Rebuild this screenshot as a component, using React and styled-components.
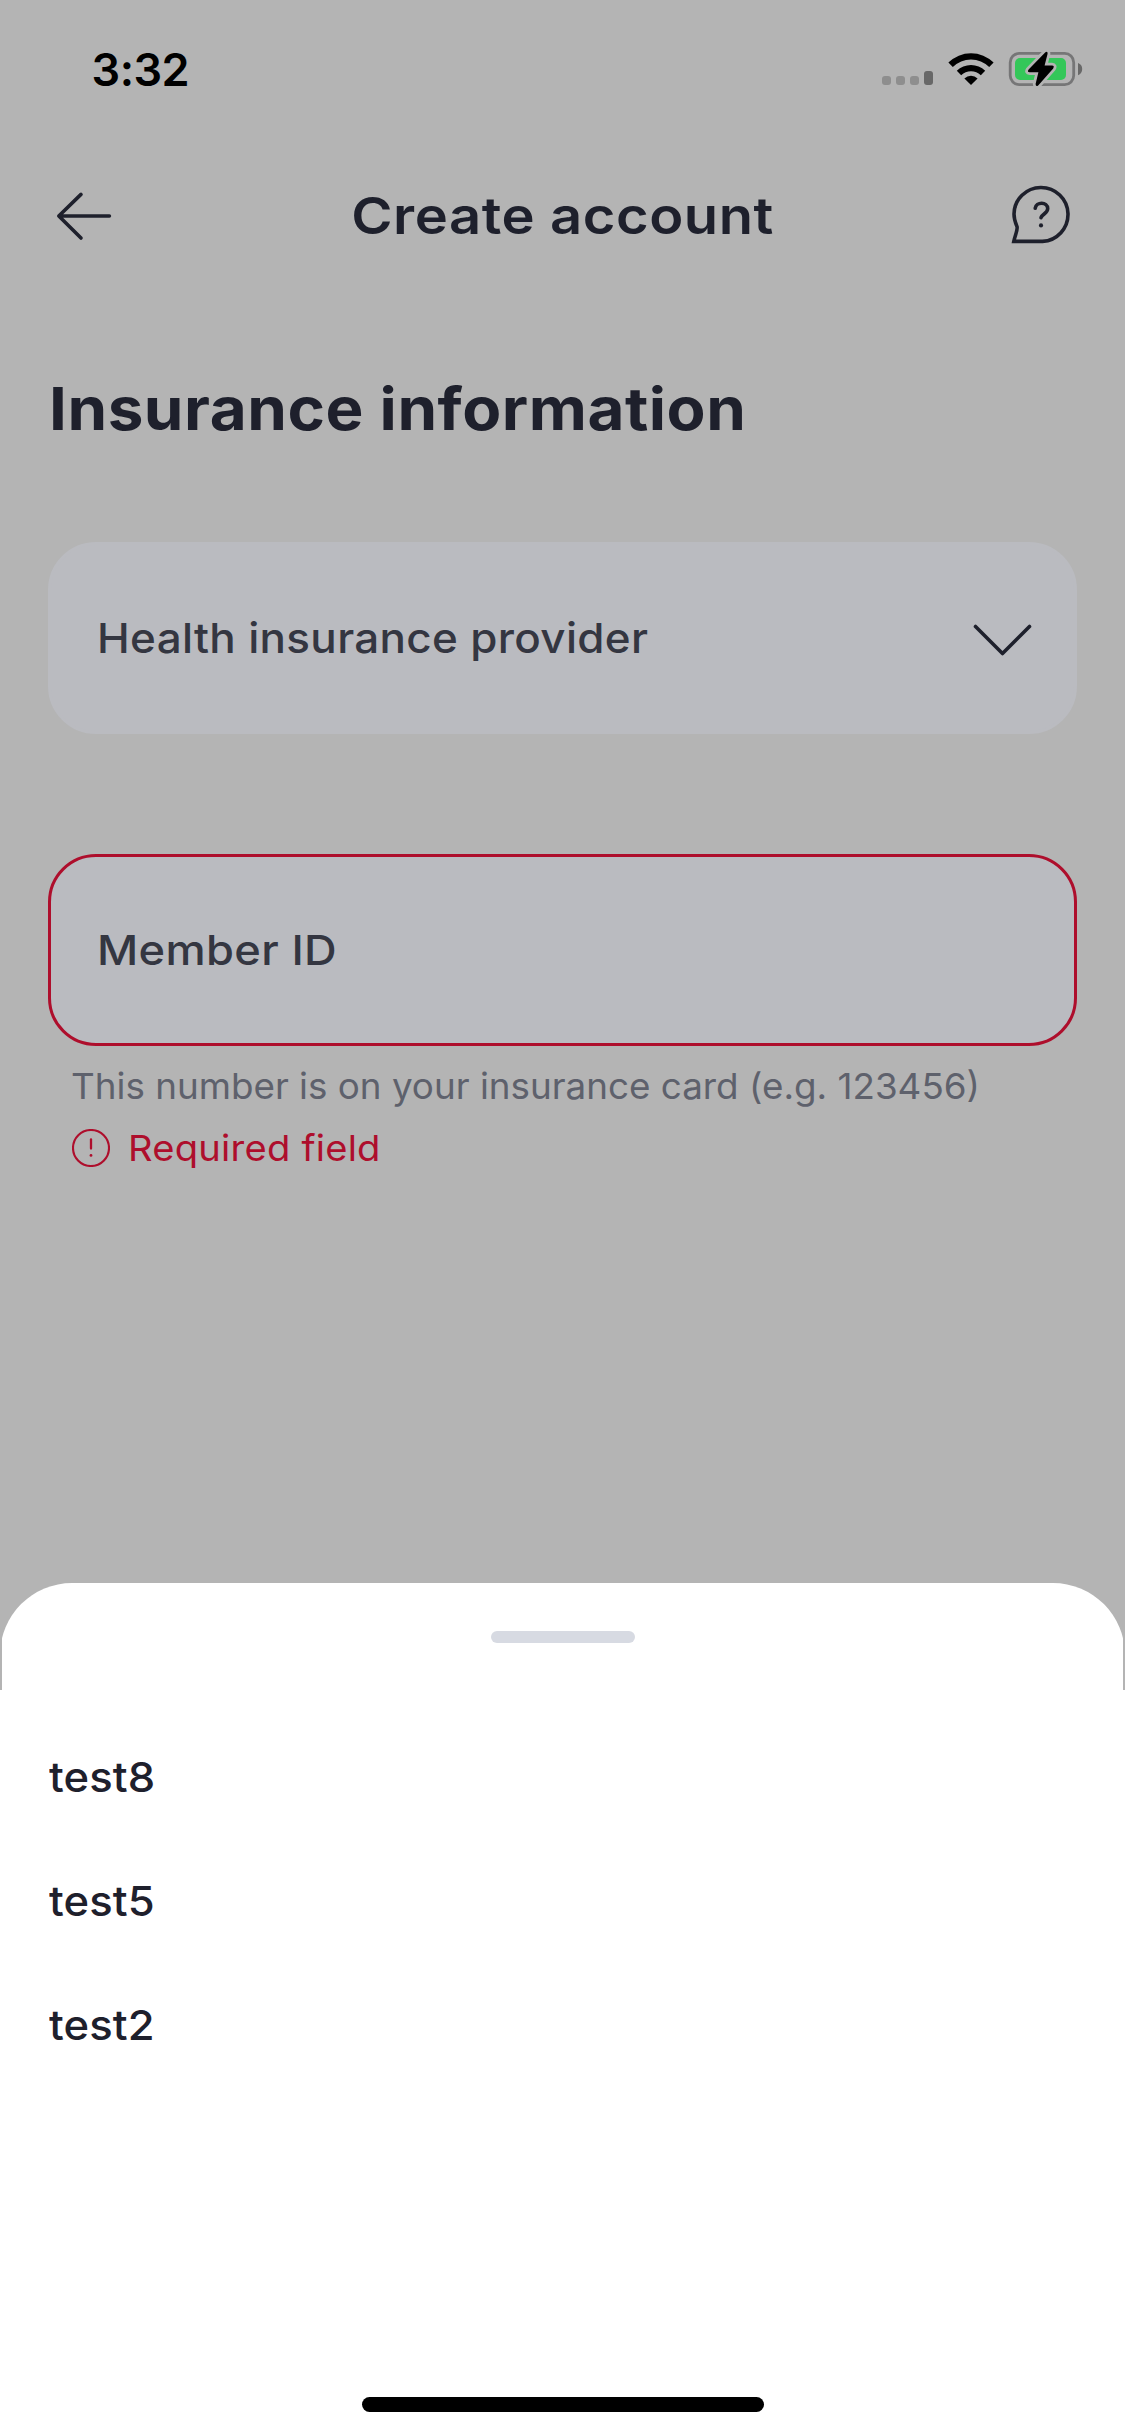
import React from "react";
import styled, { createGlobalStyle, css } from "styled-components";

const ink = "#1e202c";
const danger = "#ae0e2c";

const GlobalStyle = createGlobalStyle`
  *, *::before, *::after { box-sizing: border-box; }
  body {
    margin: 0;
    background: #b4b4b4;
    font-family: Inter, "Open Sans", sans-serif;
    color: ${ink};
  }
`;

const wide = (scale, origin = "left") => css`
  transform: scaleX(${scale});
  transform-origin: ${origin} center;
`;

const Screen = styled.div`
  display: flex;
  flex-direction: column;
  width: 1125px;
  height: 2436px;
  overflow: hidden;
  background: #b4b4b4;
`;

const StatusBar = styled.div`
  display: flex;
  align-items: center;
  justify-content: space-between;
  height: 138px;
  padding: 2px 40px 0 91.5px;
`;

const Time = styled.span`
  color: #000;
  font-size: 45px;
  font-weight: 600;
  letter-spacing: -0.5px;
  line-height: 60px;
`;

const StatusIcons = styled.svg`
  display: block;
  width: 205px;
  height: 40px;
`;

const Header = styled.header`
  display: grid;
  grid-template-columns: 60px 1fr 64px;
  align-items: center;
  height: 156px;
  padding: 0 52px 0 54px;
`;

const HeaderIcon = styled.svg`
  display: block;
  width: ${(p) => p.$size}px;
  height: ${(p) => p.$size}px;
  fill: none;
  stroke: ${ink};
  stroke-width: 3.6;
  stroke-linecap: round;
  stroke-linejoin: round;
`;

const Title = styled.h1`
  margin: 0;
  padding-left: 2px;
  font-size: 51px;
  font-weight: 600;
  letter-spacing: 0.5px;
  line-height: 64px;
  text-align: center;
  white-space: nowrap;
  ${wide(1.1, "center")}
`;

const Form = styled.main`
  display: flex;
  flex-direction: column;
  height: 1289px;
  padding: 76px 48px 0;
`;

const Heading = styled.h2`
  margin: 0 0 94px 1px;
  font-size: 59px;
  font-weight: 700;
  letter-spacing: 0.5px;
  line-height: 78px;
  white-space: nowrap;
  ${wide(1.08)}
`;

const Field = styled.div`
  display: flex;
  flex: none;
  align-items: center;
  justify-content: space-between;
  height: 192px;
  padding: 0 42px 0 46px;
  border: 3px solid ${(p) => (p.$invalid ? danger : "#babbc0")};
  border-radius: 48px;
  background: #babbc0;

  & + & { margin-top: 120px; }
`;

const Label = styled.span`
  color: #343641;
  font-size: 41.5px;
  font-weight: 500;
  letter-spacing: 0.3px;
  line-height: 60px;
  ${(p) => wide(p.$scale)}
`;

const Chevron = styled.svg`
  display: block;
  width: 60px;
  height: 34px;
  margin-top: 4px;
`;

const Hint = styled.p`
  margin: 9px 0 0 23px;
  color: #5e616c;
  font-size: 36px;
  font-weight: 400;
  line-height: 62px;
  white-space: nowrap;
  ${wide(1.022)}
`;

const ErrorRow = styled.div`
  display: flex;
  align-items: center;
  height: 62px;
  margin-left: 24px;
  gap: 18px;
  color: ${danger};
`;

const ErrorIcon = styled.svg`
  display: block;
  width: 38px;
  height: 38px;
`;

const ErrorText = styled.span`
  font-size: 36px;
  letter-spacing: 0.2px;
  line-height: 62px;
  ${wide(1.06)}
`;

const Sheet = styled.section`
  display: flex;
  flex: 1;
  flex-direction: column;
`;

const SheetClip = styled.div`
  height: 107px;
  margin: 0 2px;
  overflow: hidden;
`;

const SheetTop = styled.div`
  display: flex;
  justify-content: center;
  height: 107px;
  margin: 0 -2px;
  padding-top: 48px;
  border-radius: 72px 72px 0 0;
  background: #fff;
`;

const Grabber = styled.div`
  width: 144px;
  height: 12px;
  border-radius: 6px;
  background: #d7dae2;
`;

const SheetBody = styled.div`
  display: flex;
  flex: 1;
  flex-direction: column;
  align-items: center;
  justify-content: space-between;
  padding: 25px 0 24px;
  background: #fff;
`;

const Options = styled.ul`
  align-self: stretch;
  margin: 0;
  padding: 0 49px;
  list-style: none;
`;

const Option = styled.li`
  height: 124px;
  font-size: 41.5px;
  font-weight: 500;
  letter-spacing: 0.1px;
  line-height: 124px;
  ${wide(1.05)}
`;

const HomeIndicator = styled.div`
  width: 402px;
  height: 15px;
  border-radius: 7.5px;
  background: #000;
`;

const bolt =
  "M165.4 2.2 L148.6 19.6 Q146.8 22.2 149.6 22.2 L158.4 22.2 L155.6 34 Q155.8 37.4 158.4 35.2 L173.2 18.4 Q174.8 15.7 172 15.6 L164.6 15.4 L167.6 3.8 Q167.8 0.6 165.4 2.2 Z";

function DeviceStatus() {
  return (
    <StatusIcons viewBox="0 0 205 40">
      <g fill="#8e8e8e">
        <rect x="2" y="26" width="9" height="9" rx="3" />
        <rect x="16" y="26" width="9" height="9" rx="3" />
        <rect x="30" y="26" width="9" height="9" rx="3" />
      </g>
      <rect x="44" y="21" width="9" height="14" rx="3" fill="#686868" />
      <path d="M68.4 12.6 A32 32 0 0 1 113.6 12.6 L109.2 17 A25.8 25.8 0 0 0 72.8 17 Z" fill="#000" />
      <path d="M76.8 20.8 A20.3 20.3 0 0 1 105.2 20.8 L100.8 25.2 A14 14 0 0 0 81.2 25.2 Z" fill="#000" />
      <path d="M84.4 28.4 A9.4 9.4 0 0 1 97.6 28.4 L91 35 Z" fill="#000" />
      <rect x="130.2" y="3.4" width="63.5" height="31.2" rx="9" fill="none" stroke="#767677" strokeWidth="2.8" />
      <rect x="135" y="8" width="51" height="22" rx="5" fill="#34c759" />
      <path d="M198 13 Q202.2 14.6 202.2 19 Q202.2 23.6 198 25.2 Z" fill="#686868" />
      <path d={bolt} fill="#b4b4b4" stroke="#b4b4b4" strokeWidth="5.5" strokeLinejoin="round" />
      <path d={bolt} fill="#000" />
    </StatusIcons>
  );
}

const providers = ["test8", "test5", "test2"];

export default function App() {
  return (
    <>
      <GlobalStyle />
      <Screen>
        <StatusBar>
          <Time>3:32</Time>
          <DeviceStatus />
        </StatusBar>
        <Header>
          <HeaderIcon $size={60} viewBox="0 0 60 60">
            <path d="M55.4 30 H4.8 M27 8.4 L4.8 30 L27 52" />
          </HeaderIcon>
          <Title>Create account</Title>
          <HeaderIcon $size={64} viewBox="0 0 64 64">
            <path d="M4.8 57.4 H33.5 A27 27 0 1 0 5 30 C5 35.4 6.7 39.5 8 42.6 C9 45.6 6 51.5 4.8 57.4 Z" strokeLinejoin="miter" />
            <path d="M26.2 24.2 C27 17.6 38.6 17.4 38.7 24.6 C38.7 29.2 33.4 30 32 33.6" />
            <circle cx="32" cy="41.4" r="2.1" fill={ink} stroke="none" />
          </HeaderIcon>
        </Header>
        <Form>
          <Heading>Insurance information</Heading>
          <Field>
            <Label $scale={1.06}>Health insurance provider</Label>
            <Chevron viewBox="0 0 60 34">
              <path d="M3.5 3.5 L30.5 30.5 L57.5 3.5" fill="none" stroke={ink} strokeWidth="3.6" strokeLinecap="round" strokeLinejoin="round" />
            </Chevron>
          </Field>
          <Field $invalid>
            <Label $scale={1.09}>Member ID</Label>
          </Field>
          <Hint>This number is on your insurance card (e.g. 123456)</Hint>
          <ErrorRow>
            <ErrorIcon viewBox="0 0 38 38">
              <circle cx="19" cy="19" r="18" fill="none" stroke={danger} strokeWidth="2.1" />
              <path d="M19 10.5 V19.6" stroke={danger} strokeWidth="2.3" strokeLinecap="round" />
              <circle cx="19" cy="26.4" r="1.4" fill={danger} />
            </ErrorIcon>
            <ErrorText>Required field</ErrorText>
          </ErrorRow>
        </Form>
        <Sheet>
          <SheetClip>
            <SheetTop>
              <Grabber />
            </SheetTop>
          </SheetClip>
          <SheetBody>
            <Options>
              {providers.map((name) => (
                <Option key={name}>{name}</Option>
              ))}
            </Options>
            <HomeIndicator />
          </SheetBody>
        </Sheet>
      </Screen>
    </>
  );
}
